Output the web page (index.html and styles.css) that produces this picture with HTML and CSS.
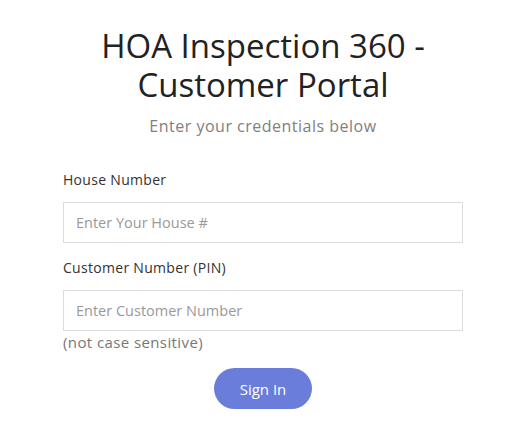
FILE: index.html
```html
<!DOCTYPE html>
<html lang="en">
<head>
    <meta charset="UTF-8">
    <title>HOA Inspection 360 - Customer Portal</title>
    <link rel="stylesheet" href="styles.css">
</head>
<body>
    <div class="page">
        <div class="portal">
            <h1>HOA Inspection 360 - Customer Portal</h1>
            <p class="subtitle">Enter your credentials below</p>
            <form class="login-form">
                <label for="house">House Number</label>
                <input type="text" id="house" placeholder="Enter Your House #">
                <label for="pin">Customer Number (PIN)</label>
                <input type="text" id="pin" placeholder="Enter Customer Number">
                <span class="hint">(not case sensitive)</span>
                <button type="button">Sign In</button>
            </form>
        </div>
    </div>
</body>
</html>
```

FILE: styles.css
```css
body, html {
    margin: 0;
    background-color: #fff;
    color: #222;
    font-family: "Open Sans", Arial, sans-serif;
}

.page {
    padding-right: 6px;
}

.portal {
    width: 400px;
    margin: 0 auto;
    padding-top: 26px;
}

h1 {
    margin: 0;
    font-size: 33px;
    font-weight: 400;
    line-height: 39px;
    text-align: center;
    padding: 0 20px;
}

.subtitle {
    margin: 10px 0 0;
    font-size: 16px;
    line-height: 24px;
    letter-spacing: 0.5px;
    color: #808080;
    text-align: center;
}

.login-form {
    display: flex;
    flex-direction: column;
    margin-top: 32px;
}

label {
    font-size: 14px;
    line-height: 20px;
    letter-spacing: 0.3px;
    color: #333;
    margin-bottom: 12px;
}

input[type="text"] {
    box-sizing: border-box;
    height: 41px;
    padding: 0 12px;
    border: 1px solid #ddd;
    font-family: inherit;
    font-size: 14.5px;
    color: #333;
    margin-bottom: 15px;
}

input::placeholder {
    color: #999;
}

.hint {
    margin-top: -15px;
    font-size: 15px;
    line-height: 22px;
    letter-spacing: 0.4px;
    color: #777;
}

button {
    align-self: center;
    width: 98px;
    height: 41px;
    margin-top: 15px;
    border: none;
    border-radius: 21px;
    background-color: #6a7ddb;
    color: #fff;
    font-family: inherit;
    font-size: 15px;
    font-weight: 500;
    cursor: pointer;
}
```
